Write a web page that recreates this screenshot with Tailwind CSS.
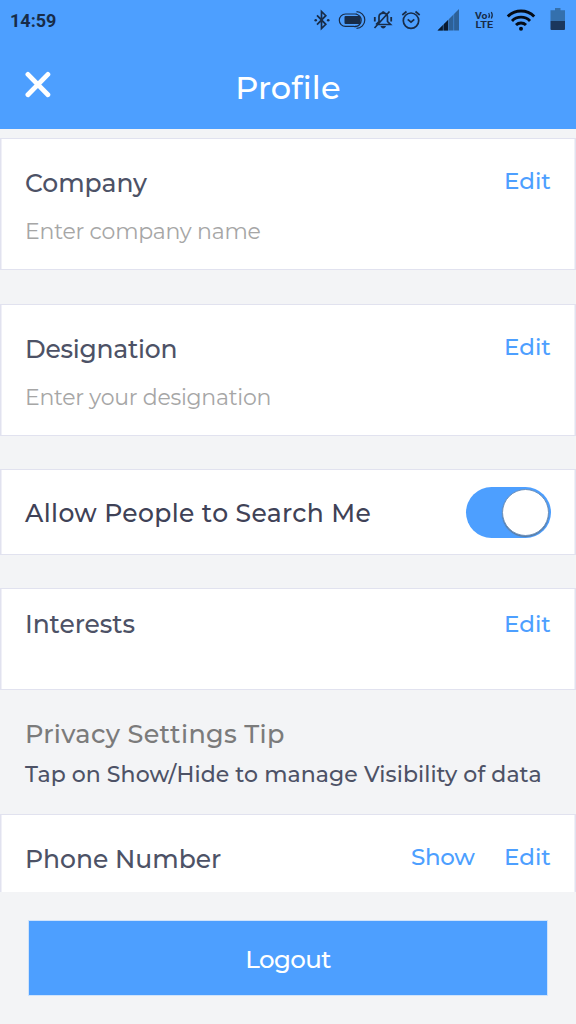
<!DOCTYPE html>
<html lang="en">
<head>
<meta charset="utf-8">
<title>Profile</title>
<script src="https://cdn.jsdelivr.net/npm/@tailwindcss/browser@4"></script>
</head>
<body class="bg-[#f3f4f6]">
<div class="w-[576px] h-[1024px] overflow-hidden flex flex-col bg-[#f3f4f6] font-['Montserrat','Inter',sans-serif] font-medium text-[#4d5266] whitespace-nowrap">
  <header class="h-[129px] shrink-0 bg-[#4d9fff]">
    <div class="h-10 flex justify-between">
      <span class="pl-[10px] pt-[9px] leading-6 font-['Roboto',sans-serif] font-bold text-[18px] text-[#182c48]">14:59</span>
      <svg class="w-[276px] h-10" viewBox="300 0 276 40" fill="none" stroke="#182c48" stroke-width="1.7">
        <path d="M317 15.3l8.800 9-4.300 4.200V11.500l4.300 4.200-8.800 9"/>
        <g fill="#182c48" stroke="none"><circle cx="315.700" cy="20.200" r="1.300"/><circle cx="328.200" cy="20.200" r="1.300"/><rect x="344.500" y="16" width="16" height="8" rx="1"/></g>
        <path stroke-width="1.200" d="M357 14H345.500a6 6 0 0 0 0 12.400H354a6 6 0 0 0 6-2M356.500 11.700a8.300 8.300 0 0 1 0 16.600M355 14a6.200 6.200 0 0 1 0 12.400"/>
        <path stroke-width="1.700" d="M377 24.500h13.500l-3-3v-4.700c0-5-8.500-5-8.500 0v4.700l-3 3M374.500 28l15-16.500"/>
        <path stroke-width="1.800" d="M374.800 17v4.500M391.200 17v4.500"/>
        <path fill="#182c48" stroke="none" d="M380.500 26h5.500c-.8 3.300-4.700 3.300-5.500 0zM381.500 13c0-2.500 3.500-2.500 3.500 0z"/>
        <circle cx="411" cy="20.700" r="7.700"/><path d="M402.300 15l4.200-3.500M419.700 15l-4.200-3.500M407.700 19.300l3.300 2.900 3.300-2.900"/>
        <g stroke="none"><path fill="#2d6198" d="M459 9v21.500h-21.500z"/><path fill="#091a2f" d="M448.300 19.700v10.800h-10.800z"/><path stroke="#4d9fff" stroke-width=".5" d="M443.300 24v7M448.500 18v13M453.700 13v18"/></g>
        <g fill="#182c48" stroke="none" font-family="Roboto, sans-serif" font-weight="700">
          <text x="475" y="18.500" font-size="9.500" textLength="12.500" lengthAdjust="spacingAndGlyphs">Vo</text>
          <text x="475.500" y="28" font-size="9.500" textLength="17.500" lengthAdjust="spacingAndGlyphs">LTE</text>
        </g>
        <path stroke-width="1.200" d="M488.700 13q1.600 2.500 0 5M491.300 12q2 3.300 0 6.500"/>
        <g stroke="#050c16" stroke-width="2.900"><path d="M507.800 16.500a18.500 18.500 0 0 1 26.400 0M512 20.900a12.700 12.700 0 0 1 18 0M516 25a7.200 7.200 0 0 1 10 0"/></g>
        <circle cx="521" cy="28.800" r="2" fill="#050c16" stroke="none"/>
        <path fill="#3470ad" stroke="none" d="M555 8h5.500v2.200h4.500V21h-14.500V10.200h4.500z"/><path fill="#1b375c" stroke="none" d="M550.500 21H565v8a1 1 0 0 1-1 1h-12.500a1 1 0 0 1-1-1z"/>
      </svg>
    </div>
    <div class="relative pt-[28px]">
      <svg class="absolute left-[25px] top-[31px] w-[26px] h-[27px]" viewBox="0 0 26 27" stroke="#fff" stroke-width="4.800" stroke-linecap="round"><path d="M2.900 3.400l20 20.400M22.900 3.400L2.900 23.800"/></svg>
      <h1 class="text-center text-[32px] leading-10 font-medium tracking-[0.150px] text-white">Profile</h1>
    </div>
  </header>

  <main class="h-[763px] shrink-0 overflow-hidden pt-[9px]">
    <section class="h-[132px] bg-white border border-[#e1e2ef] px-6 pt-[28px] shadow-[inset_1px_0_#f0f0f7,inset_-1px_0_#f0f0f7]">
      <div class="flex justify-between">
        <h2 class="text-[25px] leading-8">Company</h2>
        <a class="w-[47px] text-[23px] leading-7 text-[#4d9fff]">Edit</a>
      </div>
      <p class="mt-[19px] text-[22px] leading-7 tracking-[-0.230px] font-normal text-[#a6a6a6]">Enter company name</p>
    </section>
    <section class="mt-[34px] h-[132px] bg-white border border-[#e1e2ef] px-6 pt-[28px] shadow-[inset_1px_0_#f0f0f7,inset_-1px_0_#f0f0f7]">
      <div class="flex justify-between">
        <h2 class="text-[25px] leading-[33px] tracking-[-0.250px]">Designation</h2>
        <a class="w-[47px] text-[23px] leading-7 text-[#4d9fff]">Edit</a>
      </div>
      <p class="mt-[18px] text-[22px] leading-7 tracking-[-0.270px] font-normal text-[#a6a6a6]">Enter your designation</p>
    </section>
    <section class="mt-[33px] h-[86px] bg-white border border-[#e1e2ef] pl-6 pr-[24px] flex items-center justify-between shadow-[inset_1px_0_#f0f0f7,inset_-1px_0_#f0f0f7]">
      <h2 class="pt-[2px] text-[25px] leading-8 tracking-[0.380px] text-[#3f4257]">Allow People to Search Me</h2>
      <div class="w-[85px] h-[51px] rounded-full bg-[#4d9fff] flex items-center justify-end pr-[2px]">
        <span class="size-[47px] rounded-full bg-white border border-[#6c91bd] shadow-[0_1px_1px_#5b7896]"></span>
      </div>
    </section>
    <section class="mt-[33px] h-[102px] bg-white border border-[#e1e2ef] px-6 pt-[19px] flex justify-between shadow-[inset_1px_0_#f0f0f7,inset_-1px_0_#f0f0f7]">
      <h2 class="text-[25px] leading-8 tracking-[-0.080px]">Interests</h2>
      <a class="w-[47px] pt-[2px] text-[23px] leading-7 text-[#4d9fff]">Edit</a>
    </section>
    <div class="h-[124px] pl-[25px] pt-[28px]">
      <h2 class="text-[25.500px] leading-8 tracking-[0.320px] text-[#7b7b7b]">Privacy Settings Tip</h2>
      <p class="mt-[11px] text-[22px] leading-7 tracking-[0.090px]">Tap on Show/Hide to manage Visibility of data</p>
    </div>
    <section class="h-[132px] bg-white border border-[#e1e2ef] px-6 pt-[28px] flex shadow-[inset_1px_0_#f0f0f7,inset_-1px_0_#f0f0f7]">
      <h2 class="grow text-[25px] leading-8">Phone Number</h2>
      <a class="w-[93px] text-[23px] leading-7 tracking-[-0.300px] text-[#4d9fff]">Show</a>
      <a class="w-[47px] text-[23px] leading-7 text-[#4d9fff]">Edit</a>
    </section>
  </main>

  <footer class="h-[132px] pt-[29px] pl-[29px]">
    <button class="block w-[518px] h-[74px] bg-[#4d9fff] shadow-[0_0_0_1px_#cfe3fb] text-white text-[24.500px] tracking-[-0.600px] font-medium pt-[3px]">Logout</button>
  </footer>
</div>
</body>
</html>
